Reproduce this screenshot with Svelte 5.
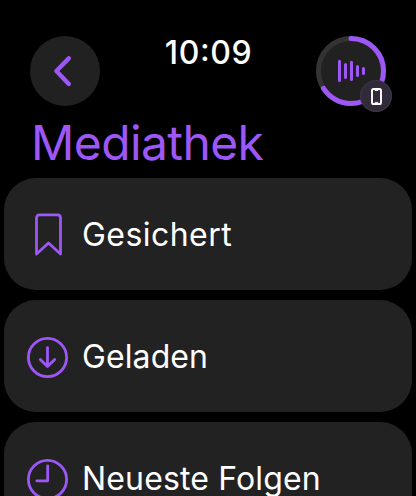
<script lang="ts">
	type Item = { id: string; label: string };

	const items: Item[] = [
		{ id: 'saved', label: 'Gesichert' },
		{ id: 'downloaded', label: 'Geladen' },
		{ id: 'latest', label: 'Neueste Folgen' }
	];

	const time = { hours: '10', minutes: '09' };
	const progress = 0.66;
</script>

<main class="watch">
	<header class="top">
		<button class="back" aria-label="Zurück">
			<svg viewBox="0 0 70 70" aria-hidden="true"><path d="M38.8 22.4 26.4 35l12.4 13" /></svg>
		</button>
		<time>{time.hours}<span class="colon">:</span>{time.minutes}</time>
		<button class="playing" aria-label="Wiedergabe">
			<svg class="ring" viewBox="0 0 70 70" aria-hidden="true">
				<circle class="disc" cx="35" cy="35" r="35" />
				<circle class="track" cx="35" cy="35" r="32.5" />
				<circle
					class="value"
					cx="35"
					cy="35"
					r="32.5"
					pathLength="1"
					stroke-dasharray="{progress} 1"
					transform="rotate(-90 35 35)"
				/>
				<path class="bars" d="M23.5 25.2v19.2M29.5 28.5v13M35.5 26.2v17.3M41.5 30.5v9M47.5 32.5v5" />
			</svg>
			<span class="badge">
				<svg viewBox="0 0 32 32" aria-hidden="true">
					<rect x="12" y="9" width="9" height="15" rx="1.6" />
					<path d="M15.2 10.5h2.6M15.2 22.4h2.6" />
				</svg>
			</span>
		</button>
	</header>

	<h1>Mediathek</h1>

	<ul>
		{#each items as item (item.id)}
			<li>
				<button class="card">
					<svg class="icon" viewBox="-0.5 0 44 44" aria-hidden="true">
						{#if item.id === 'saved'}
							<path d="M11 42V5.9q0-3 3-3h18q3 0 3 3V42L23 31z" />
						{:else if item.id === 'downloaded'}
							<circle cx="22" cy="23.5" r="19.1" />
							<path d="M22 13.7v18.8M14.8 25.4l7.2 7.1 7.2-7.1" />
						{:else}
							<circle cx="22" cy="23.5" r="19.1" />
							<path d="M22.2 9.8v15H11.3" />
						{/if}
					</svg>
					<span class={['label', item.id]}>{item.label}</span>
				</button>
			</li>
		{/each}
	</ul>
</main>

<style>
	:global(body) {
		margin: 0;
		background: #000;
	}

	.watch {
		--accent: #9d57f6;
		width: 416px;
		height: 496px;
		overflow: hidden;
		background: #000;
		color: #fff;
		font-family: Inter, Roboto, sans-serif;
	}

	button {
		padding: 0;
		border: 0;
		color: inherit;
		font: inherit;
	}
	svg {
		display: block;
		fill: none;
		stroke: var(--accent);
		stroke-linecap: round;
		stroke-linejoin: round;
	}

	.top {
		display: flex;
		justify-content: space-between;
		height: 70px;
		padding: 36px 30px 0;
	}
	.back {
		width: 70px;
		height: 70px;
		border-radius: 50%;
		background: #212121;
	}
	.back path { stroke-width: 4.4; }

	time {
		padding-left: 1px;
		font-size: 32px;
		font-weight: 500;
		line-height: 33px;
		letter-spacing: 0.6px;
	}
	.colon {
		line-height: 0;
		vertical-align: 3px;
	}

	.playing {
		position: relative;
		width: 70px;
		height: 70px;
		background: none;
	}
	.disc { fill: #212121; stroke: none; }
	.track { stroke: #333; stroke-width: 5; }
	.value { stroke-width: 5; }
	.bars { stroke-width: 3; }

	.badge {
		position: absolute;
		right: -6px;
		bottom: -6px;
		width: 32px;
		height: 32px;
		border-radius: 50%;
		background: #302a3b;
		box-shadow: inset 0 0 0 1px #3b3742;
	}
	.badge svg { stroke: #fff; }
	.badge rect { stroke-width: 1.9; }
	.badge path { stroke-width: 0.9; }

	h1 {
		margin: 0;
		padding: 2px 0 0 31px;
		color: var(--accent);
		font-size: 48px;
		font-weight: 400;
		line-height: 70px;
		letter-spacing: -0.6px;
	}

	ul {
		display: flex;
		flex-direction: column;
		gap: 10px;
		margin: 0;
		padding: 0 4px;
		list-style: none;
	}
	.card {
		display: flex;
		align-items: center;
		gap: 13px;
		width: 100%;
		height: 112px;
		padding-left: 21px;
		border-radius: 32px;
		background: #222223;
		text-align: left;
	}
	.icon {
		flex: none;
		width: 44px;
		height: 44px;
		stroke-width: 2.8;
	}
	.label {
		padding-top: 2px;
		font-size: 32px;
		line-height: 40px;
		white-space: nowrap;
	}
	.saved { letter-spacing: 0.45px; }
	.downloaded { letter-spacing: 0.1px; }
	.latest { letter-spacing: 0.15px; }
</style>
